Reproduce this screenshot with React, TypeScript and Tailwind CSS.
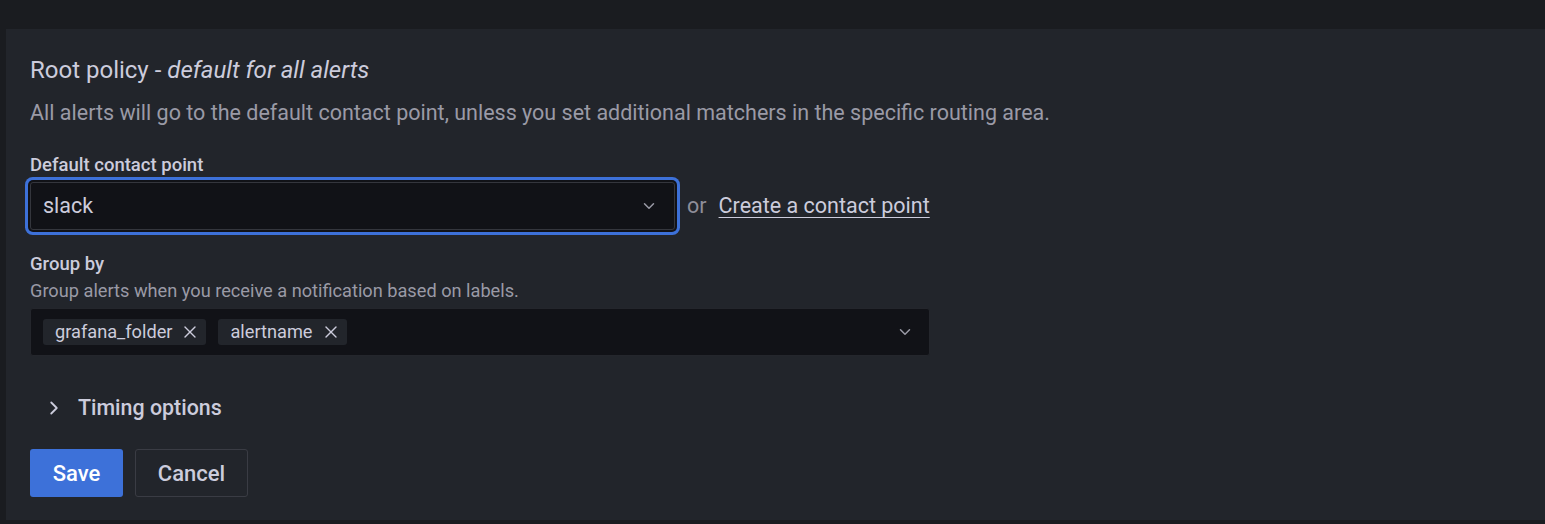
import React from 'react';
import { ChevronDown, ChevronRight, X } from 'lucide-react';

const groupByLabels = ['grafana_folder', 'alertname'];

const App: React.FC = () => {
    return (
        <div className="min-h-screen bg-[#1a1c20] pt-[29px] pl-[6px] pb-[3px] font-['Roboto','Liberation_Sans',sans-serif] text-[#ccccdc]">
            <div className="bg-[#22252b] px-[24px] pt-[26px] pb-[23px]">
                <h2 className="text-[24px] leading-[30px] font-normal">
                    Root policy - <i>default for all alerts</i>
                </h2>
                <p className="mt-[14px] text-[21.5px] leading-[28px] text-[#9a9aa6]">
                    All alerts will go to the default contact point, unless you set additional matchers in the specific routing area.
                </p>

                <div className="mt-[26px]">
                    <label className="block text-[18.5px] leading-[24px] font-medium">Default contact point</label>
                    <div className="mt-[5px] flex items-center">
                        <div className="w-[645px] h-[48px] rounded-[3px] border border-[#34363d] bg-[#111217] ring-[3px] ring-[#3d71d9] ring-offset-2 ring-offset-[#111217] flex items-center pl-[12px] pr-[16px]">
                            <span className="flex-1 text-[21.5px]">slack</span>
                            <ChevronDown size={18} strokeWidth={2} className="text-[#9a9aa6]" />
                        </div>
                        <span className="ml-[12px] text-[21.5px] text-[#8e8e99]">or</span>
                        <a href="#" className="ml-[12px] text-[21.5px] underline underline-offset-[4px] decoration-[1px]">
                            Create a contact point
                        </a>
                    </div>
                </div>

                <div className="mt-[22px]">
                    <label className="block text-[18.5px] leading-[24px] font-medium">Group by</label>
                    <p className="mt-[4px] text-[18.2px] leading-[22px] text-[#9a9aa6]">
                        Group alerts when you receive a notification based on labels.
                    </p>
                    <div className="mt-[6px] w-[900px] h-[48px] rounded-[3px] border border-[#24262c] bg-[#111217] flex items-center pl-[12px] pr-[15px]">
                        <div className="flex-1 flex items-center gap-[12px]">
                            {groupByLabels.map(label => (
                                <span key={label} className="h-[26px] flex items-center gap-[8px] rounded-[3px] bg-[#22252b] pl-[12px] pr-[6px] text-[18.2px]">
                                    {label}
                                    <X size={20} strokeWidth={1.6} className="text-[#ccccdc]" />
                                </span>
                            ))}
                        </div>
                        <ChevronDown size={18} strokeWidth={2} className="text-[#9a9aa6]" />
                    </div>
                </div>

                <button className="mt-[38px] flex items-center h-[28px] pl-[13px] text-[21.4px] font-medium">
                    <ChevronRight size={22} strokeWidth={2} className="text-[#ccccdc]" />
                    <span className="ml-[13px]">Timing options</span>
                </button>

                <div className="mt-[27px] flex gap-[12px]">
                    <button className="h-[48px] w-[93px] rounded-[3px] bg-[#3d71d9] text-white text-[22px] font-medium">
                        Save
                    </button>
                    <button className="h-[48px] w-[113px] rounded-[3px] border border-[#3a3c44] text-[22px] font-medium">
                        Cancel
                    </button>
                </div>
            </div>
        </div>
    );
};

export default App;
